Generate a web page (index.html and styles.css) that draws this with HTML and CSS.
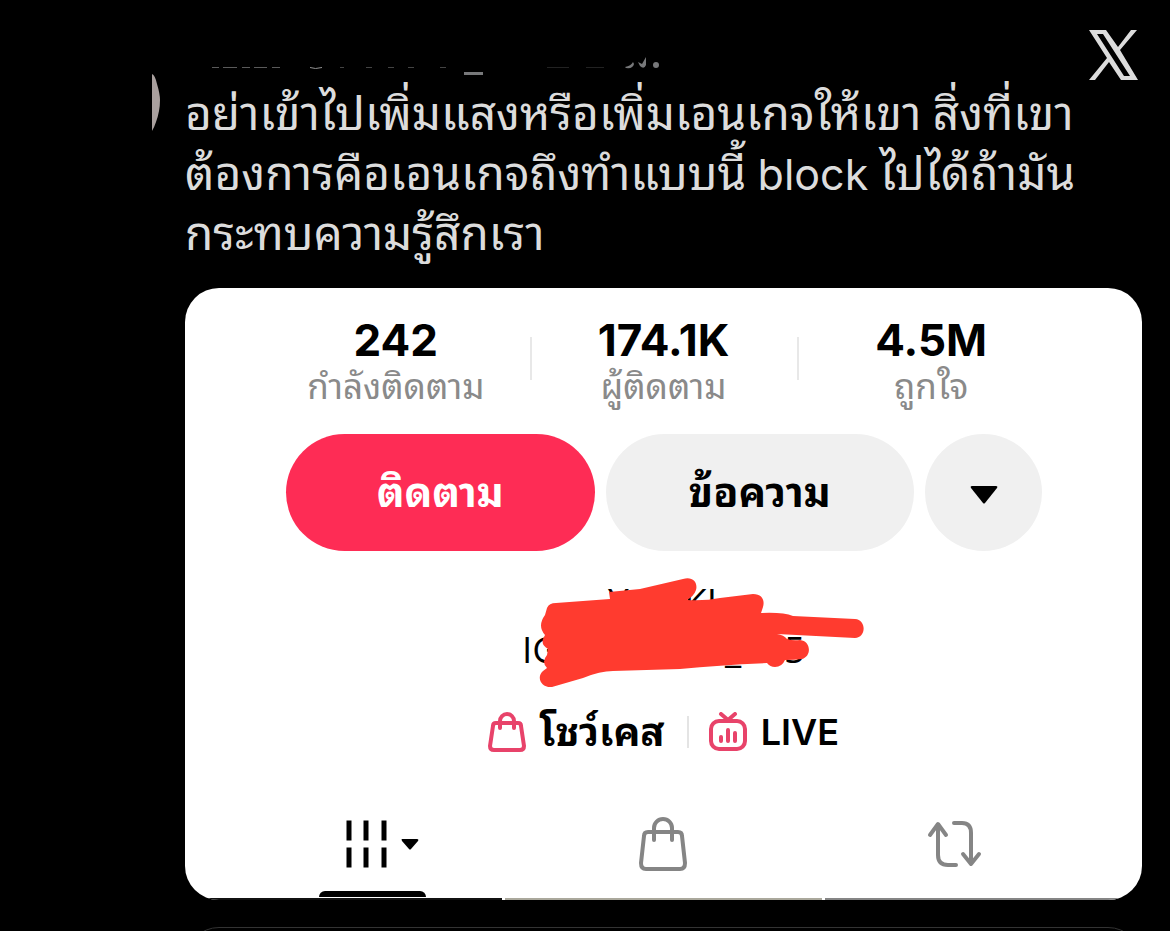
FILE: index.html
```
<!DOCTYPE html>
<html lang="th">
<head>
    <meta charset="UTF-8">
    <meta name="viewport" content="width=device-width, initial-scale=1">
    <title>Post</title>
    <link rel="stylesheet" href="styles.css">
</head>
<body>
    <div class="page">
        <header class="top">
            <!-- what is left of the cropped name line -->
            <svg class="name-rest" width="454" height="20" viewBox="208 56 454 20" aria-hidden="true">
                <g fill="none" stroke="#77787a" stroke-width="1">
                    <path d="M212 67.500h7M223 67.500h14M242 67.500h8M254 67.500h13M272 67.500h8" stroke="#5a5a5a"/>
                    <path d="M310 67.500q5 2 12 0" stroke="#929292"/>
                    <path d="M340 67.500h4M366 67.500h6M388 67.500h6M408 67.500h6M440 67.500h6" stroke="#444"/>
                    <path d="M547 67.500h22M586 67.500h18" stroke="#222"/>
                </g>
                <path d="M464 72h19v3h-19z" fill="#77787a"/>
                <path d="M625 67q6-1 8-5l1 2q-1 5-8 4zM638 62l4 2 4-7v8q-2 5-6 1z" fill="#77787a"/>
                <circle cx="656" cy="65" r="3" fill="#77787a"/>
            </svg>
            <a class="logo" href="#" aria-label="X">
                <svg width="49" height="50" viewBox="0 0 49 50">
                    <path fill="#dcdcdc" fill-rule="evenodd" d="M0 0h17L29 17 42 0h6L31 20l18 30H32L20 32 6 50H0L18 28zM8 4l27 42h6L14 4z"/>
                </svg>
            </a>
        </header>

        <main class="post">
            <svg class="avatar" width="8" height="60" viewBox="0 0 8 60" aria-hidden="true">
                <path fill="#a9a09e" d="M0 0q3 1 5 10 3 10 3 16 0 11-4 22-2 6-4 9z"/>
            </svg>
            <div class="body">
                <p class="text">อย่าเข้าไปเพิ่มแสงหรือเพิ่มเอนเกจให้เขา สิ่งที่เขา<br>ต้องการคือเอนเกจถึงทำแบบนี้ <span class="latin" lang="en">block</span> ไปได้ถ้ามัน<br>กระทบความรู้สึกเรา</p>

                <section class="card">
                    <ul class="stats">
                        <li><strong>242</strong><span>กำลังติดตาม</span></li>
                        <li><strong>174.1K</strong><span>ผู้ติดตาม</span></li>
                        <li><strong>4.5M</strong><span>ถูกใจ</span></li>
                    </ul>

                    <div class="actions">
                        <button class="btn follow">ติดตาม</button>
                        <button class="btn">ข้อความ</button>
                        <button class="btn more" aria-label="เพิ่มเติม">
                            <svg width="28" height="20" viewBox="0 0 28 20"><path d="M2 1h24q2 0 1 2L15 18q-1 1-2 0L1 3Q0 1 2 1z"/></svg>
                        </button>
                    </div>

                    <!-- bio with the names scribbled over -->
                    <svg class="bio" width="350" height="115" viewBox="520 575 350 115">
                        <g class="bio-text">
                            <text x="608" y="615">Y</text>
                            <text x="684" y="615">KI</text>
                            <text x="522" y="663">IG</text>
                            <text x="725" y="663">_</text>
                            <text x="784" y="663">5</text>
                        </g>
                        <path fill="#ff3b2f" d="M547 608Q549 603 556 603L610 599 609 592 640 589 683 579C693 576 698 583 696 590Q694 596 687 600 705 601 720 598L753 594C762 594 765 600 763 607L761 613Q783 612 793 616L855 619C867 620 866 638 855 638L777 634Q784 635 787 639 793 641 800 640C811 641 812 656 802 659Q794 660 785 660 782 667 775 667 770 667 767 663 720 665 680 669L613 671Q600 671 583 678L552 687C541 688 536 677 543 671L547 668Q541 662 547 655L548 649Q541 645 543 639L545 635Q537 626 545 615z"/>
                    </svg>

                    <nav class="links">
                        <a href="#">
                            <svg width="38" height="40" viewBox="0 0 38 40" fill="none" stroke="#e8436a" stroke-width="4" stroke-linecap="round" stroke-linejoin="round">
                                <path d="M8 11h22q3 0 3 3l3 20q0 4-4 4H6q-4 0-4-4l3-20q0-3 3-3z"/>
                                <path d="M12 16V9a7 7 0 0 1 14 0v7"/>
                            </svg>
                            <span>โชว์เคส</span>
                        </a>
                        <a href="#">
                            <svg width="38" height="40" viewBox="0 0 38 40" fill="none" stroke="#e8436a" stroke-width="4" stroke-linecap="round">
                                <rect x="2" y="9" width="34" height="28" rx="8"/>
                                <path d="M12 2l7 6 7-6" stroke-linejoin="round"/>
                                <path d="M12 25v4M19 18v11M26 21v8"/>
                            </svg>
                            <span class="live" lang="en">LIVE</span>
                        </a>
                    </nav>

                    <nav class="tabs">
                        <a class="active" href="#" aria-label="วิดีโอ">
                            <svg width="74" height="50" viewBox="0 0 74 50">
                                <path d="M4 4v15M21 4v15M39 4v15M4 31v15M21 31v15M39 31v15" stroke="#000" stroke-width="5" stroke-linecap="square"/>
                                <path d="M57 20h15q2 0 1 2l-7 8q-1 1-2 0l-7-8q-1-2 0-2z"/>
                            </svg>
                        </a>
                        <a href="#" aria-label="ร้านค้า">
                            <svg width="50" height="54" viewBox="0 0 50 54" fill="none" stroke="#858585" stroke-width="4" stroke-linecap="round" stroke-linejoin="round">
                                <path d="M10 15h30q4 0 4 4l3 27q0 6-5 6H8q-5 0-5-6l3-27q0-4 4-4z"/>
                                <path d="M16 23V11a9 9 0 0 1 18 0v12"/>
                            </svg>
                        </a>
                        <a href="#" aria-label="รีโพสต์">
                            <svg width="56" height="50" viewBox="0 0 56 50" fill="none" stroke="#858585" stroke-width="4" stroke-linecap="round" stroke-linejoin="round">
                                <path d="M3 16l8-11 8 11M11 6v30q0 10 10 10h8"/>
                                <path d="M27 4h8q9 0 9 10v30M36 35l8 10 8-10"/>
                            </svg>
                        </a>
                    </nav>
                    <div class="thumbs"><i></i><i></i><i></i></div>
                </section>

                <div class="next"></div>
            </div>
        </main>
    </div>
</body>
</html>
```
FILE: styles.css
```
* {
    box-sizing: border-box;
}

body {
    margin: 0;
    background: #000;
    font-family: Inter, "Noto Sans Thai Looped", Loma, Garuda, Waree, "Noto Sans", sans-serif;
}

svg {
    display: block;
    flex: none;
}

a {
    color: inherit;
    text-decoration: none;
}

.page {
    height: 100vh;
    overflow: hidden;
}

.top {
    display: flex;
    justify-content: space-between;
    align-items: flex-start;
    height: 74px;
    padding: 30px 32px 0 208px;
}

.name-rest {
    margin-top: 26px;
}

.post {
    display: flex;
    gap: 25px;
    padding: 0 28px 0 152px;
}

.body {
    flex: 1;
    min-width: 0;
}

.text {
    margin: 0;
    padding: 10px 0 24px;
    font-family: Roboto, "Noto Sans Thai Looped", Loma, Garuda, Waree, sans-serif;
    font-size: 46px;
    line-height: 60px;
    color: #dcdcdc;
    white-space: nowrap;
}

.latin {
    font-family: Inter, sans-serif;
    font-size: 43px;
    line-height: 1;
}

.card {
    background: #fff;
    color: #000;
    border-radius: 34px;
    overflow: hidden;
}

.stats {
    display: grid;
    grid-template-columns: repeat(3, 1fr);
    margin: 0;
    padding: 26px 77px 0;
    list-style: none;
    text-align: center;
}

.stats li {
    display: flex;
    flex-direction: column;
    position: relative;
}

.stats li + li::before {
    content: "";
    position: absolute;
    left: 0;
    top: 23px;
    width: 2px;
    height: 43px;
    background: #e8e8e8;
}

.stats strong {
    font-size: 44px;
    line-height: 52px;
}

.stats span {
    font-size: 35px;
    line-height: 40px;
    color: #8a8a8a;
}

.actions {
    display: flex;
    gap: 11px;
    padding: 28px 100px 0 101px;
}

.btn {
    flex: 1;
    height: 117px;
    padding: 0 0 8px;
    border: 0;
    border-radius: 59px;
    background: #f0f0f0;
    color: #000;
    font: inherit;
    font-size: 41px;
    font-weight: 700;
}

.follow {
    background: #fe2c55;
    color: #fff;
}

.more {
    display: flex;
    flex: 0 0 117px;
    align-items: center;
    justify-content: center;
    padding: 4px 0 0;
}

.bio {
    margin: 24px auto 0;
    position: relative;
    left: 31px;
}

.bio-text {
    font-family: "Open Sans", sans-serif;
    font-size: 37px;
}

.links {
    display: flex;
    justify-content: center;
    padding-top: 12px;
    font-size: 40px;
    font-weight: 700;
    line-height: 60px;
}

.links a {
    display: flex;
    align-items: center;
    gap: 14px;
    padding: 0 22px;
    position: relative;
}

.links a + a::before {
    content: "";
    position: absolute;
    left: 0;
    top: 14px;
    width: 2px;
    height: 32px;
    background: #e4e4e4;
}

.live {
    font-size: 36px;
    font-weight: 600;
}

.tabs {
    display: grid;
    grid-template-columns: repeat(3, 1fr);
    padding: 44px 41px 0;
}

.tabs a {
    display: flex;
    justify-content: center;
    align-items: center;
    height: 91px;
    padding-bottom: 15px;
    position: relative;
}

.tabs .active {
    padding-left: 20px;
}

.tabs .active::after {
    content: "";
    position: absolute;
    left: 50%;
    bottom: 0;
    width: 107px;
    height: 6px;
    margin-left: -53px;
    border-radius: 6px 6px 0 0;
    background: #000;
}

.thumbs {
    display: grid;
    grid-template-columns: 1fr 1fr 1fr;
    gap: 3px;
    padding-top: 1px;
}

.thumbs i {
    height: 2px;
    background: #111;
}

.thumbs i:nth-child(2) {
    background: #aaa89c;
}

.thumbs i:nth-child(3) {
    background: #858585;
}

.next {
    height: 80px;
    margin-top: 27px;
    border: 1px solid #333;
    border-radius: 34px;
}
```
